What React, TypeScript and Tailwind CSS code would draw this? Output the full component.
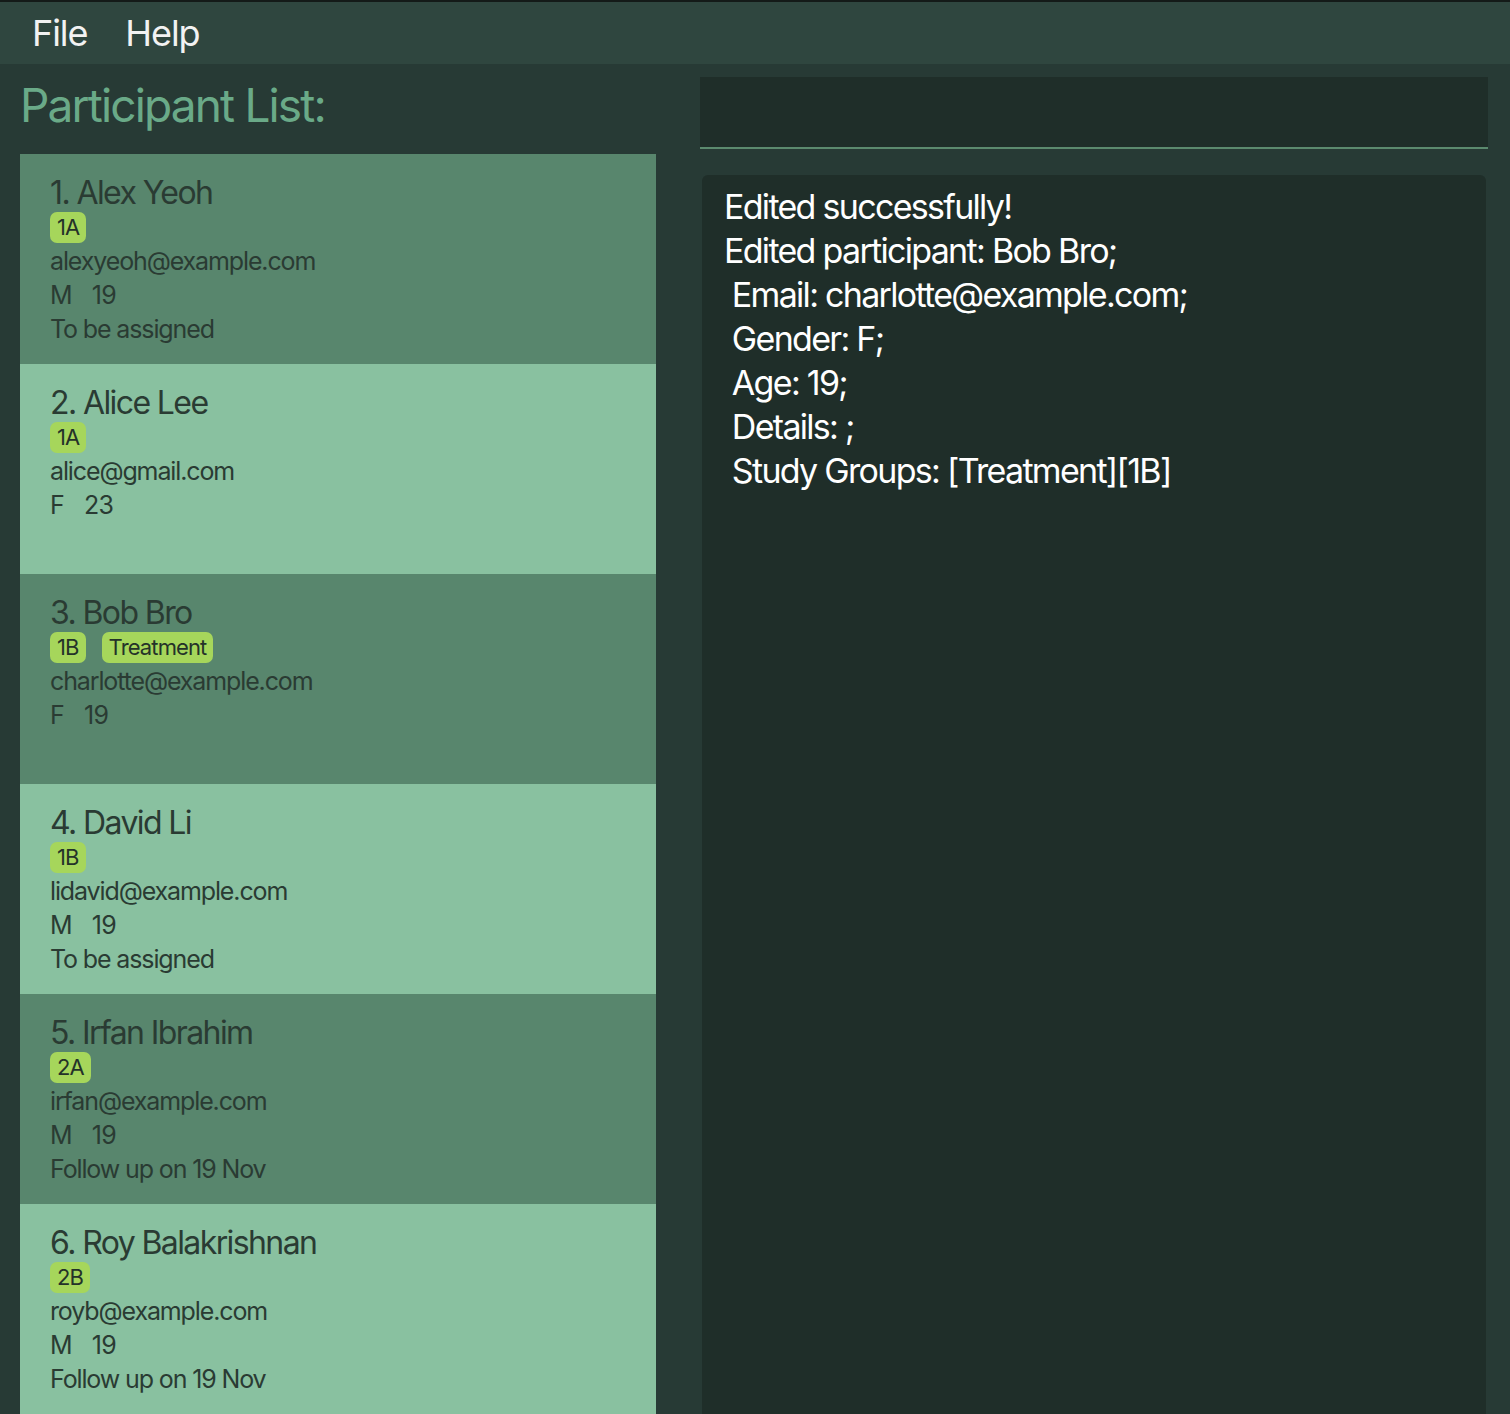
import React from "react";

type Participant = {
  name: string
  tags: string[]
  email: string
  gender: string
  age: number
  note?: string
}

const participants: Participant[] = [
  { name: "Alex Yeoh", tags: ["1A"], email: "alexyeoh@example.com", gender: "M", age: 19, note: "To be assigned" },
  { name: "Alice Lee", tags: ["1A"], email: "alice@gmail.com", gender: "F", age: 23 },
  { name: "Bob Bro", tags: ["1B", "Treatment"], email: "charlotte@example.com", gender: "F", age: 19 },
  { name: "David Li", tags: ["1B"], email: "lidavid@example.com", gender: "M", age: 19, note: "To be assigned" },
  { name: "Irfan Ibrahim", tags: ["2A"], email: "irfan@example.com", gender: "M", age: 19, note: "Follow up on 19 Nov" },
  { name: "Roy Balakrishnan", tags: ["2B"], email: "royb@example.com", gender: "M", age: 19, note: "Follow up on 19 Nov" },
]

const resultlines = [
  "Edited successfully!",
  "Edited participant: Bob Bro;",
  "\u00a0Email: charlotte@example.com;",
  "\u00a0Gender: F;",
  "\u00a0Age: 19;",
  "\u00a0Details: ;",
  "\u00a0Study Groups: [Treatment][1B]",
]

function Card({ p, index }: { p: Participant; index: number }) {
  const dark = index % 2 === 0
  return (
    <div className={`h-[210px] shrink-0 pl-[30px] pt-[20px] text-[#2a3b33] ${dark ? "bg-[#58866d]" : "bg-[#89c1a0]"}`}>
      <div className="text-[32px] leading-[37px] tracking-[-0.05em]">{index + 1}. {p.name}</div>
      <div className="flex gap-[16px] h-[33px] items-center">
        {p.tags.map(t => (
          <span key={t} className="bg-[#a6d65b] rounded-[7px] px-[7px] h-[31px] flex items-center text-[22px] tracking-[-0.04em] text-[#243229]">{t}</span>
        ))}
      </div>
      <div className="text-[25px] leading-[34px] tracking-[-0.045em]">{p.email}</div>
      <div className="text-[25px] leading-[34px] tracking-[-0.03em] flex gap-[20px]">
        <span>{p.gender}</span>
        <span>{p.age}</span>
      </div>
      {p.note && <div className="text-[25px] leading-[34px] tracking-[-0.045em]">{p.note}</div>}
    </div>
  )
}

export default function App() {
  return (
    <div className="w-[1510px] h-[1414px] overflow-hidden bg-[#273a35] flex flex-col border-t-2 border-[#141a18]" style={{ fontFamily: "Inter, 'Noto Sans', sans-serif" }}>
      <div className="h-[62px] shrink-0 bg-[#2f463f] flex items-center pl-[32px] gap-[38px] text-[#f2f2f2] text-[36px] tracking-[-0.03em]">
        <span>File</span>
        <span>Help</span>
      </div>
      <div className="flex flex-1 min-h-0">
        <div className="w-[656px] pl-[20px] flex flex-col shrink-0">
          <div className="h-[90px] shrink-0 flex items-center pb-[8px] text-[46px] tracking-[-0.04em] text-[#6aaa88]">Participant List:</div>
          {participants.map((p, i) => <Card key={p.name} p={p} index={i} />)}
        </div>
        <div className="ml-[44px] w-[788px] flex flex-col pt-[13px]">
          <div className="h-[72px] shrink-0 bg-[#1f2e29] border-b-2 border-[#5b8a6e]"></div>
          <div className="flex-1 mt-[26px] mx-[2px] bg-[#1f2e29] rounded-t-[6px] pt-[10px] pl-[22px] text-white">
            {resultlines.map((l, i) => (
              <div key={i} className="text-[34px] leading-[44px] tracking-[-0.05em] whitespace-pre">{l}</div>
            ))}
          </div>
        </div>
      </div>
    </div>
  )
}
